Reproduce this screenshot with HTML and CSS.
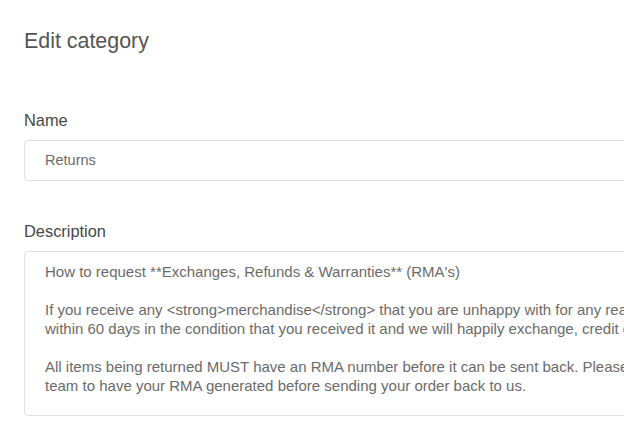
FILE: index.html
```html
<!DOCTYPE html>
<html>
<head>
<meta charset="utf-8">
<link rel="stylesheet" href="styles.css">
</head>
<body>
<div class="page">
  <h1 class="title">Edit category</h1>
  <div class="field field-name">
    <label class="label">Name</label>
    <div class="input">Returns</div>
  </div>
  <div class="field field-desc">
    <label class="label">Description</label>
    <div class="textarea">
      <p class="line">How to request **Exchanges, Refunds &amp; Warranties** (RMA's)</p>
      <p class="line">&nbsp;</p>
      <p class="line">If you receive any &lt;strong&gt;merchandise&lt;/strong&gt; that you are unhappy with for any reason, please return it</p>
      <p class="line">within 60 days in the condition that you received it and we will happily exchange, credit or refund your order.</p>
      <p class="line">&nbsp;</p>
      <p class="line">All items being returned MUST have an RMA number before it can be sent back. Please contact our support</p>
      <p class="line">team to have your RMA generated before sending your order back to us.</p>
    </div>
  </div>
</div>
</body>
</html>
```
FILE: styles.css
```css
html, body {
  margin: 0;
  padding: 0;
  background: #ffffff;
  overflow: hidden;
}
body {
  font-family: "Liberation Sans", Arial, sans-serif;
  width: 624px;
  height: 447px;
}
.page {
  padding: 28px 0 0 24px;
  width: 900px;
}
.title {
  margin: 0;
  font-size: 21.4px;
  font-weight: normal;
  color: #555555;
  line-height: 26px;
}
.field {
  display: flex;
  flex-direction: column;
}
.field-name {
  margin-top: 56px;
}
.field-desc {
  margin-top: 40px;
}
.label {
  font-size: 16.4px;
  color: #474747;
  line-height: 20px;
  margin-bottom: 10px;
}
.input {
  box-sizing: border-box;
  height: 41px;
  border: 1px solid #e0e0e0;
  border-radius: 4px;
  padding: 0 20px;
  font-size: 14.5px;
  color: #6b6b6b;
  line-height: 39px;
}
.textarea {
  box-sizing: border-box;
  height: 165px;
  border: 1px solid #e0e0e0;
  border-radius: 4px;
  padding: 10px 20px;
  font-size: 15px;
  color: #6b6b6b;
  line-height: 19px;
  white-space: nowrap;
}
.line {
  margin: 0;
}
```
